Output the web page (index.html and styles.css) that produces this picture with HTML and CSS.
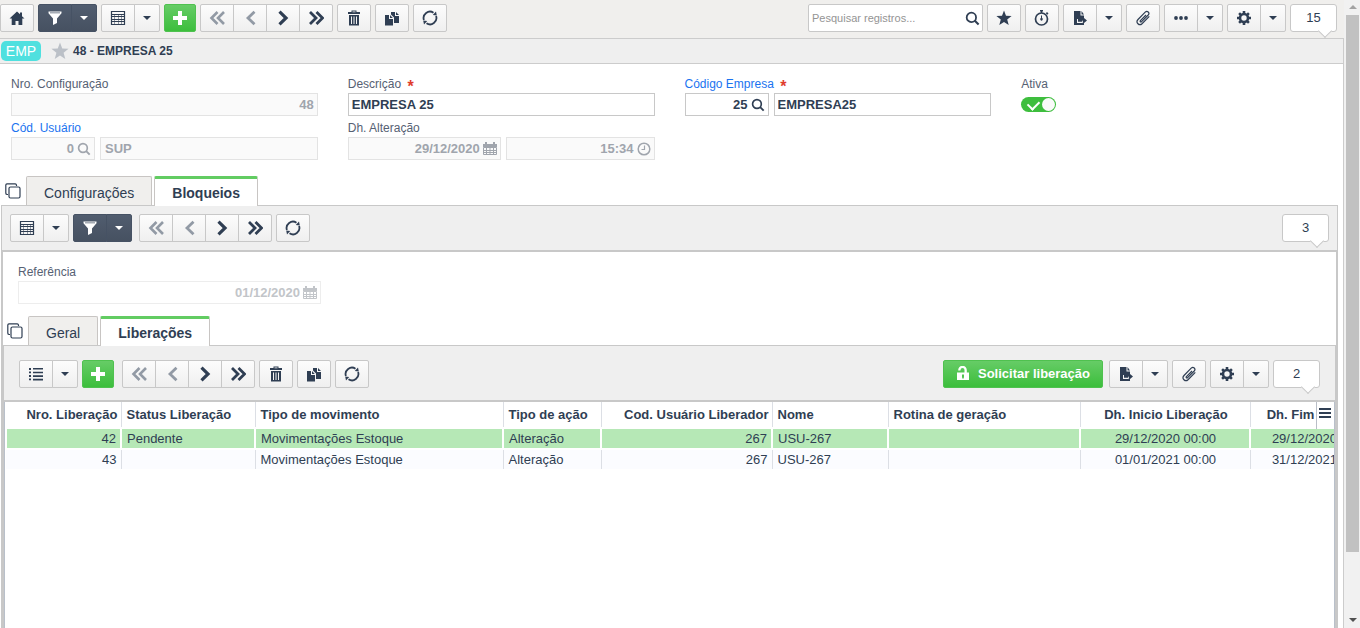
FILE: index.html
```html
<!DOCTYPE html>
<html lang="pt-BR">
<head>
<meta charset="utf-8">
<title>48 - EMPRESA 25</title>
<link rel="stylesheet" href="styles.css">
</head>
<body>
<svg class="sprite" aria-hidden="true">
  <symbol id="home" viewBox="0 0 16 16"><path d="M8 1.500 0.500 8.500h2.200V15h3.800v-4h3v4h3.800V8.500h2.200L13 6.200V2.500h-2v1.800z"/></symbol>
  <symbol id="filter" viewBox="0 0 16 16"><path fill-rule="evenodd" d="M1.500 1.500h13v1.800L10 8.500V13l-4 2V8.500L1.500 3.300zM3 2.500v.7h10v-.7z"/></symbol>
  <symbol id="caret" viewBox="0 0 8 4"><path d="M0 0h8L4 4z"/></symbol>
  <symbol id="grid" viewBox="0 0 16 16"><path fill="none" stroke="currentColor" stroke-width="1.200" d="M1.500 1.500h13v13h-13zM1 4.500h14M1 6.500h14M1 9.500h14M1 11.500h14"/><path fill="none" stroke="currentColor" opacity=".5" d="M4.500 4v10M8.500 4v10M11.500 4v10"/></symbol>
  <symbol id="list" viewBox="0 0 16 16"><path d="M1 2h2v2H1zm0 3.500h2v1.800H1zM1 9h2v2H1zm0 3.500h2v1.800H1zM5 2h10v1.600H5zm0 3.700h10v1.600H5zm0 3.600h10v1.600H5zm0 3.500h10v1.600H5z"/></symbol>
  <symbol id="plus" viewBox="0 0 16 16"><path d="M6 1h4v5h5v4h-5v5H6v-5H1V6h5z"/></symbol>
  <symbol id="prev" viewBox="0 0 16 16"><path fill="none" stroke="currentColor" stroke-width="2.800" d="M12.500 1.700 6 8l6.500 6.300"/></symbol>
  <symbol id="next" viewBox="0 0 16 16"><path fill="none" stroke="currentColor" stroke-width="3.200" d="M4.500 1.700 11 8l-6.500 6.300"/></symbol>
  <symbol id="first" viewBox="0 0 16 16"><path fill="none" stroke="currentColor" stroke-width="2.600" d="M8.500 2 2.500 8l6 6M15 2 9 8l6 6"/></symbol>
  <symbol id="last" viewBox="0 0 16 16"><path fill="none" stroke="currentColor" stroke-width="2.800" d="m8.500 2 6 6-6 6M2 2l6 6-6 6"/></symbol>
  <symbol id="trash" viewBox="0 0 16 16"><path fill-rule="evenodd" d="M5.500.5h5V2H14v2H2V2h3.500zM6.500 1.500v.7h3v-.7zM3 5h10v10.500H3zM5 6.500v7.500h1V6.500zm2.500 0v7.500h1V6.500zm2.500 0v7.500h1V6.500z"/></symbol>
  <symbol id="copy" viewBox="0 0 16 16"><path d="M1 5h4v4h4v6.500H1zM6 5l2.800 3H6zM7 2h4v4h4v7h-5V7.500L7 4.500zM12 2l3 3h-3z"/></symbol>
  <symbol id="refresh" viewBox="0 0 16 16"><path fill="none" stroke="currentColor" stroke-width="1.800" d="M1.900 10A6.400 6.400 0 0 1 11.500 2.700M14.100 6A6.400 6.400 0 0 1 4.500 13.300"/><path d="M10.800 5 14 1.500l.8 4zM5.200 11 2 14.500l-.8-4z"/></symbol>
  <symbol id="search" viewBox="0 0 16 16"><circle cx="6.800" cy="6.800" r="5" fill="none" stroke="currentColor" stroke-width="1.900"/><path fill="none" stroke="currentColor" stroke-width="2.200" d="m10.200 10.200 4.300 4.300"/></symbol>
  <symbol id="star" viewBox="0 0 16 16"><path d="m8 .5 2 5.300 5.600.2-4.400 3.500L12.700 15 8 11.900 3.300 15l1.500-5.500L.4 6l5.600-.2z"/></symbol>
  <symbol id="timer" viewBox="0 0 16 16"><circle cx="7.500" cy="9" r="6" fill="none" stroke="currentColor" stroke-width="1.700"/><path d="M6 0h3v1.500h-.8V3H6.800V1.500H6zM11.800 3.300 13 2.100l1.500 1.500-1.200 1.200zM7 5.500h1V8a1.300 1.300 0 1 1-1 0z"/></symbol>
  <symbol id="export" viewBox="0 0 16 16"><path d="M2 1h6.500v4.500H12V8l3 2.500-3 2.500v2H2zM9.500 1 12 4.500H9.500z"/><path fill="#f5f5f5" d="M5 9h1v2.800h4V10l1.200 2.300-1.200 1V13H5z"/></symbol>
  <symbol id="clip" viewBox="0 0 16 16"><path fill="none" stroke="currentColor" stroke-width="1.200" d="m11 5-5.600 5.600c-.7.900.4 1.900 1.200 1.100l6.600-6.700c2-2.200-.9-4.900-3-2.900L3 9.500c-2.800 3 1.300 6.800 4 4.200l7.300-7.400"/></symbol>
  <symbol id="dots" viewBox="0 0 16 16"><circle cx="3" cy="8" r="1.900"/><circle cx="8" cy="8" r="1.900"/><circle cx="13" cy="8" r="1.900"/></symbol>
  <symbol id="gear" viewBox="0 0 16 16"><path d="M6.700 1h2.600v3H6.700zm0 11h2.600v3H6.700zM1 6.700h3v2.600H1zm11 0h3v2.600h-3zM2.200 4l1.800-1.800 2.200 2.200-1.800 1.800zM9.800 11.600l1.800-1.800 2.200 2.200-1.800 1.800zM9.800 4.400 12 2.200 13.800 4l-2.200 2.200zM2.200 12l2.200-2.200 1.800 1.800L4 13.800z"/><circle cx="8" cy="8" r="4" fill="none" stroke="currentColor" stroke-width="2.600"/></symbol>
  <symbol id="calendar" viewBox="0 0 14 14"><path d="M0 2h14v3H0zM2 0h2v3H2zm8 0h2v3h-2z"/><path fill="none" stroke="currentColor" d="M.5 5.500h13v7H.5zM0 8.500h14M0 10.500h14M3.500 6v6M7 6v6M10.500 6v6"/></symbol>
  <symbol id="clock" viewBox="0 0 14 14"><circle cx="7" cy="7" r="5.800" fill="none" stroke="currentColor" stroke-width="1.500"/><path fill="none" stroke="currentColor" stroke-width="1.200" d="M7.500 3.500v4H4.500"/></symbol>
  <symbol id="windows" viewBox="0 0 16 16"><path fill="none" stroke="currentColor" stroke-width="1.200" d="M3 11.500H2A1.400 1.400 0 0 1 .8 10V2A1.300 1.300 0 0 1 2 .8h8A1.400 1.400 0 0 1 11.500 2v1M5.500 4h8a1.500 1.500 0 0 1 1.500 1.500v8a1.500 1.500 0 0 1-1.500 1.500h-8A1.500 1.500 0 0 1 4 13.500v-8A1.500 1.500 0 0 1 5.500 4z"/></symbol>
  <symbol id="unlock" viewBox="0 0 16 16"><path fill-rule="evenodd" d="M2 6.500h7.500V4a2 2 0 0 0-4 0v.5H3.200V4a4.300 4.300 0 0 1 8.600 0v2.500H14v7.500H2zM7 8.500v2l.3 2h1.400l.3-2v-2z"/></symbol>
  <symbol id="menu" viewBox="0 0 12 10"><path d="M0 0h12v2H0zm0 4h12v2H0zm0 4h12v2H0z"/></symbol>
</svg>

<div class="app">
  <main class="page">
    <div class="toolbar toolbar-top">
      <button class="btn" aria-label="Início"><svg class="icon"><use href="#home"/></svg></button>
      <div class="group">
        <button class="btn dark" aria-label="Filtro"><svg class="icon"><use href="#filter"/></svg></button>
        <button class="btn dark drop" aria-label="Opções de filtro"><svg class="caret"><use href="#caret"/></svg></button>
      </div>
      <div class="group">
        <button class="btn" aria-label="Grade"><svg class="icon"><use href="#grid"/></svg></button>
        <button class="btn drop" aria-label="Opções de grade"><svg class="caret"><use href="#caret"/></svg></button>
      </div>
      <button class="btn green" aria-label="Adicionar"><svg class="icon"><use href="#plus"/></svg></button>
      <div class="group">
        <button class="btn off" aria-label="Primeiro"><svg class="icon"><use href="#first"/></svg></button>
        <button class="btn off" aria-label="Anterior"><svg class="icon"><use href="#prev"/></svg></button>
        <button class="btn" aria-label="Próximo"><svg class="icon"><use href="#next"/></svg></button>
        <button class="btn" aria-label="Último"><svg class="icon"><use href="#last"/></svg></button>
      </div>
      <button class="btn" aria-label="Excluir"><svg class="icon"><use href="#trash"/></svg></button>
      <button class="btn" aria-label="Duplicar"><svg class="icon"><use href="#copy"/></svg></button>
      <button class="btn" aria-label="Atualizar"><svg class="icon"><use href="#refresh"/></svg></button>
      <div class="spacer"></div>
      <div class="search">
        <input type="text" placeholder="Pesquisar registros..." aria-label="Pesquisar registros">
        <svg class="icon"><use href="#search"/></svg>
      </div>
      <button class="btn" aria-label="Favorito"><svg class="icon"><use href="#star"/></svg></button>
      <button class="btn" aria-label="Tempo"><svg class="icon"><use href="#timer"/></svg></button>
      <div class="group">
        <button class="btn" aria-label="Exportar"><svg class="icon"><use href="#export"/></svg></button>
        <button class="btn drop" aria-label="Opções de exportação"><svg class="caret"><use href="#caret"/></svg></button>
      </div>
      <button class="btn" aria-label="Anexos"><svg class="icon"><use href="#clip"/></svg></button>
      <div class="group">
        <button class="btn" aria-label="Mais"><svg class="icon"><use href="#dots"/></svg></button>
        <button class="btn drop" aria-label="Mais opções"><svg class="caret"><use href="#caret"/></svg></button>
      </div>
      <div class="group">
        <button class="btn" aria-label="Configurar"><svg class="icon"><use href="#gear"/></svg></button>
        <button class="btn drop" aria-label="Opções de configuração"><svg class="caret"><use href="#caret"/></svg></button>
      </div>
      <div class="count">15</div>
    </div>

    <header class="record">
      <span class="tag">EMP</span>
      <svg class="fav"><use href="#star"/></svg>
      <h1>48 - EMPRESA 25</h1>
    </header>

    <form class="fields">
      <div class="field">
        <label for="nro">Nro. Configuração</label>
        <div class="box ro"><input id="nro" class="num" type="text" value="48" disabled></div>
      </div>
      <div class="field">
        <label for="desc">Descrição <span class="req">*</span></label>
        <div class="box"><input id="desc" type="text" value="EMPRESA 25"></div>
      </div>
      <div class="field">
        <label class="link" for="emp">Código Empresa <span class="req">*</span></label>
        <div class="pair code">
          <div class="box"><input id="emp" class="num" type="text" value="25"><svg class="icon"><use href="#search"/></svg></div>
          <div class="box"><input type="text" value="EMPRESA25" aria-label="Nome da empresa"></div>
        </div>
      </div>
      <div class="field">
        <label for="ativa">Ativa</label>
        <input id="ativa" class="toggle" type="checkbox" checked>
      </div>
      <div class="field">
        <label class="link" for="usu">Cód. Usuário</label>
        <div class="pair code">
          <div class="box ro"><input id="usu" class="num" type="text" value="0" disabled><svg class="icon"><use href="#search"/></svg></div>
          <div class="box ro"><input type="text" value="SUP" aria-label="Nome do usuário" disabled></div>
        </div>
      </div>
      <div class="field">
        <label for="data">Dh. Alteração</label>
        <div class="pair halves">
          <div class="box ro"><input id="data" class="num" type="text" value="29/12/2020" disabled><svg class="icon"><use href="#calendar"/></svg></div>
          <div class="box ro"><input class="num" type="text" value="15:34" aria-label="Hora da alteração" disabled><svg class="icon"><use href="#clock"/></svg></div>
        </div>
      </div>
    </form>

    <nav class="tabs">
      <svg class="windows"><use href="#windows"/></svg>
      <button class="tab">Configurações</button>
      <button class="tab active">Bloqueios</button>
    </nav>

    <section class="panel">
      <div class="toolbar toolbar-mid">
        <div class="group">
          <button class="btn" aria-label="Grade"><svg class="icon"><use href="#grid"/></svg></button>
          <button class="btn drop" aria-label="Opções de grade"><svg class="caret"><use href="#caret"/></svg></button>
        </div>
        <div class="group">
          <button class="btn dark" aria-label="Filtro"><svg class="icon"><use href="#filter"/></svg></button>
          <button class="btn dark drop" aria-label="Opções de filtro"><svg class="caret"><use href="#caret"/></svg></button>
        </div>
        <div class="group apart">
          <button class="btn off" aria-label="Primeiro"><svg class="icon"><use href="#first"/></svg></button>
          <button class="btn off" aria-label="Anterior"><svg class="icon"><use href="#prev"/></svg></button>
          <button class="btn" aria-label="Próximo"><svg class="icon"><use href="#next"/></svg></button>
          <button class="btn" aria-label="Último"><svg class="icon"><use href="#last"/></svg></button>
        </div>
        <button class="btn" aria-label="Atualizar"><svg class="icon"><use href="#refresh"/></svg></button>
        <div class="spacer"></div>
        <div class="count">3</div>
      </div>

      <div class="panel-body">
        <div class="field reference">
          <label for="ref">Referência</label>
          <div class="box faint"><input id="ref" class="num" type="text" value="01/12/2020" disabled><svg class="icon"><use href="#calendar"/></svg></div>
        </div>

        <nav class="tabs">
          <svg class="windows"><use href="#windows"/></svg>
          <button class="tab">Geral</button>
          <button class="tab active">Liberações</button>
        </nav>

        <section class="subpanel">
          <div class="toolbar toolbar-sub">
            <div class="group">
              <button class="btn" aria-label="Lista"><svg class="icon"><use href="#list"/></svg></button>
              <button class="btn drop" aria-label="Opções de lista"><svg class="caret"><use href="#caret"/></svg></button>
            </div>
            <button class="btn green" aria-label="Adicionar"><svg class="icon"><use href="#plus"/></svg></button>
            <div class="group apart">
              <button class="btn off" aria-label="Primeiro"><svg class="icon"><use href="#first"/></svg></button>
              <button class="btn off" aria-label="Anterior"><svg class="icon"><use href="#prev"/></svg></button>
              <button class="btn" aria-label="Próximo"><svg class="icon"><use href="#next"/></svg></button>
              <button class="btn" aria-label="Último"><svg class="icon"><use href="#last"/></svg></button>
            </div>
            <button class="btn" aria-label="Excluir"><svg class="icon"><use href="#trash"/></svg></button>
            <button class="btn" aria-label="Duplicar"><svg class="icon"><use href="#copy"/></svg></button>
            <button class="btn" aria-label="Atualizar"><svg class="icon"><use href="#refresh"/></svg></button>
            <div class="spacer"></div>
            <button class="btn green request"><svg class="icon"><use href="#unlock"/></svg>Solicitar liberação</button>
            <div class="group">
              <button class="btn" aria-label="Exportar"><svg class="icon"><use href="#export"/></svg></button>
              <button class="btn drop" aria-label="Opções de exportação"><svg class="caret"><use href="#caret"/></svg></button>
            </div>
            <button class="btn" aria-label="Anexos"><svg class="icon"><use href="#clip"/></svg></button>
            <div class="group">
              <button class="btn" aria-label="Configurar"><svg class="icon"><use href="#gear"/></svg></button>
              <button class="btn drop" aria-label="Opções de configuração"><svg class="caret"><use href="#caret"/></svg></button>
            </div>
            <div class="count">2</div>
          </div>

          <div class="table-wrap">
            <table>
              <colgroup><col class="w-nro"><col class="w-status"><col class="w-mov"><col class="w-acao"><col class="w-cod"><col class="w-nome"><col class="w-rotina"><col class="w-inicio"><col class="w-fim"></colgroup>
              <thead>
                <tr><th class="right">Nro. Liberação</th><th>Status Liberação</th><th>Tipo de movimento</th><th>Tipo de ação</th><th class="right">Cod. Usuário Liberador</th><th>Nome</th><th>Rotina de geração</th><th class="center">Dh. Inicio Liberação</th><th class="center">Dh. Fim Liberação</th></tr>
              </thead>
              <tbody>
                <tr class="selected"><td class="right">42</td><td>Pendente</td><td>Movimentações Estoque</td><td>Alteração</td><td class="right">267</td><td>USU-267</td><td></td><td class="center">29/12/2020 00:00</td><td class="center">29/12/2020 00:00</td></tr>
                <tr><td class="right">43</td><td></td><td>Movimentações Estoque</td><td>Alteração</td><td class="right">267</td><td>USU-267</td><td></td><td class="center">01/01/2021 00:00</td><td class="center">31/12/2021 00:00</td></tr>
              </tbody>
            </table>
            <button class="columns" aria-label="Colunas"><svg><use href="#menu"/></svg></button>
          </div>
        </section>
      </div>
    </section>
  </main>

  <div class="scrollbar" aria-hidden="true">
    <svg class="caret up"><use href="#caret"/></svg>
    <div class="track"><div class="thumb"></div></div>
    <svg class="caret"><use href="#caret"/></svg>
  </div>
</div>
</body>
</html>
```

FILE: styles.css
```css
* { box-sizing: border-box; }

body {
  margin: 0;
  background: #fff;
  color: #2f3e53;
  font: 13px/18px "Liberation Sans", Arial, sans-serif;
}

button, input { font: inherit; color: inherit; margin: 0; }
svg { fill: currentColor; flex: none; }
.sprite { display: none; }

.app { display: flex; height: 100vh; overflow: hidden; }
.page { flex: 1; min-width: 0; display: flex; flex-direction: column; border-right: 1px solid #ccc; }

/* Toolbars */
.toolbar { display: flex; align-items: center; gap: 4px; background: #efefef; flex: none; }
.toolbar-top { background: #f0efed; padding: 4px 7px 6px 0; margin-right: -1px; }
.toolbar-mid { padding: 8px; border-bottom: 2px solid #c8c8c8; }
.toolbar-sub { padding: 14px 15px 12px; border-bottom: 2px solid #c8c8c8; }
.spacer { flex: 1; }
.group { display: flex; }
.group .btn + .btn { margin-left: -1px; border-radius: 0; }
.group .btn:first-child { border-radius: 2px 0 0 2px; }
.group .btn:last-child { border-radius: 0 2px 2px 0; }
.apart { margin-left: 3px; }
.toolbar-sub .apart { margin-left: 4px; }

.btn {
  display: flex;
  align-items: center;
  justify-content: center;
  width: 34px;
  height: 28px;
  padding: 0;
  border: 1px solid #c8c8c8;
  border-radius: 2px;
  background: linear-gradient(#fcfcfc, #efefef);
}
.btn.drop { width: 26px; }
.btn.off { color: #929aa5; }
.btn.dark { color: #fff; background: linear-gradient(#515d6f, #465161); border-color: #465264; }
.btn.green { width: 32px; color: #fff; background: linear-gradient(#66cc66, #3cbe3c); border-color: #4fc14f; }
.btn.request { width: auto; padding: 0 12px 0 11px; gap: 7px; font-weight: bold; margin-right: 2px; }
.icon { width: 16px; height: 16px; }
.caret { width: 8px; height: 4px; }

.search { display: flex; align-items: center; width: 175px; height: 28px; padding: 0 2px 0 3px; border: 1px solid #c8c8c8; border-radius: 2px; background: #fff; }
.search input { flex: 1; min-width: 0; padding: 0; border: 0; outline: 0; background: none; font-size: 11px; }
.search input::placeholder { color: #949494; }
.search .icon { width: 15px; height: 15px; }

.count { position: relative; width: 47px; height: 28px; border: 1px solid #c8c8c8; border-radius: 3px; background: #fff; text-align: center; line-height: 26px; }
.count::after { content: ""; position: absolute; right: 6px; bottom: -5px; width: 9px; height: 9px; background: #fff; border: solid #c8c8c8; border-width: 0 1px 1px 0; transform: rotate(45deg); }

/* Record header */
.record { display: flex; align-items: center; height: 26px; padding-left: 1px; background: #efefef; border: solid #ccc; border-width: 1px 0; flex: none; }
.record h1 { margin: 0 0 0 4px; font-size: 12px; }
.tag { width: 40px; height: 20px; border-radius: 5px; background: #4fe0df; color: #fff; font-size: 14px; line-height: 20px; text-align: center; }
.fav { width: 18px; height: 18px; margin-left: 10px; color: #bbc0c7; }

/* Form */
.fields { display: grid; grid-template-columns: repeat(4, 1fr); gap: 3px 30px; padding: 11px 15px 16px 11px; flex: none; }
.field { min-width: 0; }
.field label { display: block; font-size: 12px; line-height: 18px; color: #566173; }
.field .link { color: #1a73f0; }
.req { margin-left: 3px; color: #e03c2c; font-size: 16px; line-height: 12px; font-weight: bold; vertical-align: -4px; }
.box { display: flex; align-items: center; height: 23px; padding: 0 3px; border: 1px solid #c8c8c8; background: #fff; min-width: 0; }
.box input { flex: 1; width: 0; min-width: 0; padding: 0; border: 0; outline: 0; background: none; font-weight: bold; }
.box .num { text-align: right; }
.box.ro { padding: 0 3px 0 4px; border-color: #e3e3e3; background: #fafafa; color: #a0a5ad; }
.box.faint { border-color: #ededed; color: #c2c5c9; }
.box .icon { width: 14px; height: 14px; margin-left: 3px; }
.pair { display: grid; gap: 5px; }
.code { grid-template-columns: 84px 1fr; }
.halves { grid-template-columns: 153px 1fr; }
.reference { width: 303px; margin: 11px 0 12px 15px; }

.toggle { appearance: none; display: block; position: relative; width: 35px; height: 15px; margin-top: 4px; border-radius: 8px; background: #3ebe3e; }
.toggle::before { content: ""; position: absolute; left: 7px; top: 3px; width: 9px; height: 6px; border: solid #fff; border-width: 0 0 2px 2px; transform: rotate(-45deg); }
.toggle::after { content: ""; position: absolute; right: 1px; top: 1px; width: 13px; height: 13px; border-radius: 50%; background: #fafafa; }

/* Tabs */
.tabs { display: flex; gap: 2px; height: 30px; padding-left: 5px; margin-bottom: -1px; position: relative; flex: none; }
.panel-body .tabs { padding-left: 4px; }
.windows { width: 16px; height: 16px; margin: 7px 3px 0 0; }
.tab { height: 29px; padding: 3px 17px 0; border: 1px solid #c8c5c3; border-bottom: 0; border-radius: 2px 2px 0 0; background: #f0efed; font-size: 14px; }
.tab.active { height: 30px; padding-top: 0; border-top: 3px solid #62cc62; background: #fff; font-weight: bold; }

/* Panels */
.panel { flex: 1; min-height: 0; display: flex; flex-direction: column; margin: 0 5px 0 1px; border: 1px solid #c8c8c8; border-bottom: 0; }
.panel-body { flex: 1; min-height: 0; display: flex; flex-direction: column; border: solid #c8c8c8; border-width: 0 1px; }
.subpanel { flex: 1; min-height: 0; display: flex; flex-direction: column; border: solid #c8c8c8; border-width: 1px 1px 0 1px; }

/* Table */
.table-wrap { flex: 1; min-height: 0; position: relative; overflow: hidden; border: solid #b9c0ca; border-width: 0 1px; }
table { table-layout: fixed; width: 1388px; border-collapse: collapse; }
th, td { overflow: hidden; white-space: nowrap; text-align: left; border-right: 1px solid #dcdfe5; }
th { height: 26px; padding: 0 3px 0 5px; border-bottom: 1px solid #b9bec7; }
td { height: 21px; padding: 0 4px 0 5px; border-bottom: 2px solid #fff; background: #fbfcff; line-height: 17px; }
.right { text-align: right; }
.center { text-align: center; }
.selected td { border: 2px solid #fff; background: #b6e8b6; }
.w-nro { width: 115px; }
.w-status { width: 134px; }
.w-mov { width: 248px; }
.w-acao { width: 98px; }
.w-cod { width: 171px; }
.w-nome { width: 116px; }
.w-rotina { width: 192px; }
.w-inicio { width: 170px; }
.w-fim { width: 144px; }
.columns { position: absolute; top: 0; right: 0; display: flex; justify-content: center; align-items: center; width: 18px; height: 27px; padding: 0 1px 5px 0; border: 0; border-left: 1px solid #b9bec7; background: #fff; }
.columns svg { width: 12px; height: 10px; }

/* Scrollbar */
.scrollbar { display: flex; flex-direction: column; align-items: center; width: 16px; padding: 5px 1px 6px 2px; background: #f1f1f1; color: #505050; }
.scrollbar .up { transform: scaleY(-1); color: #a3a3a3; }
.track { flex: 1; align-self: stretch; padding: 6px 0; }
.thumb { height: 90%; background: #c1c1c1; }
```
